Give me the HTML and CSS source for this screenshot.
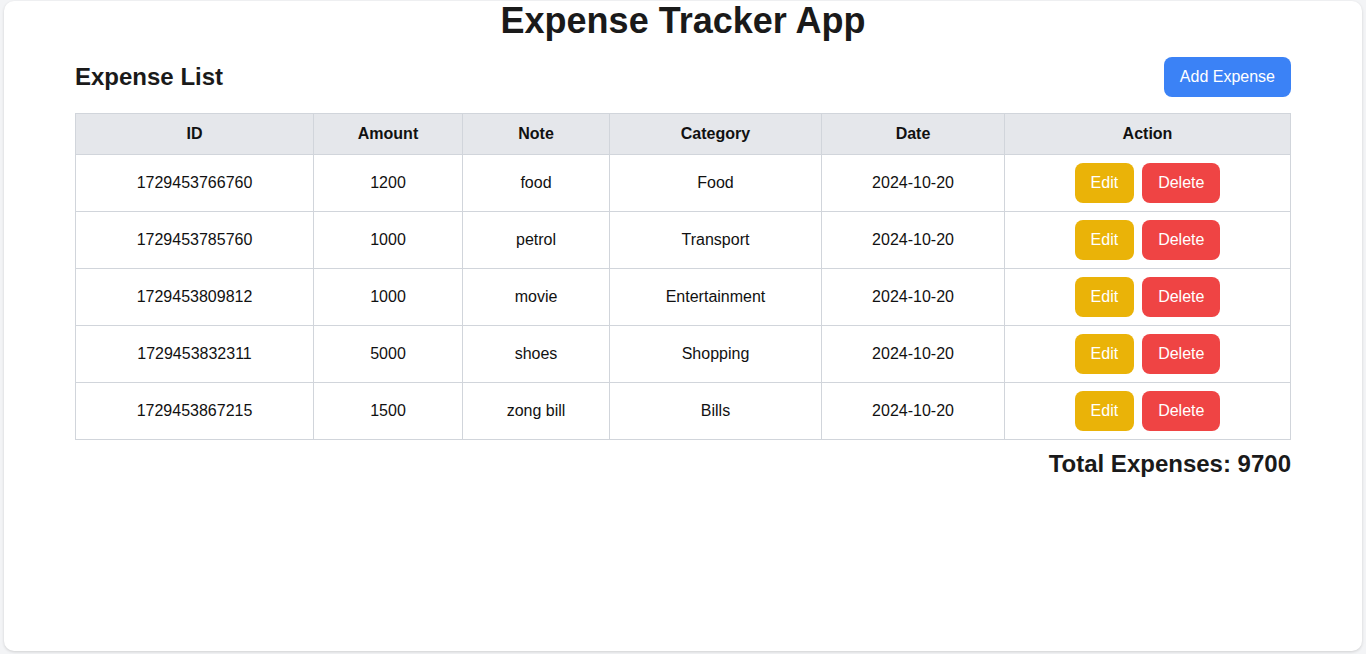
FILE: index.html
```html
<!DOCTYPE html>
<html lang="en">
<head>
    <meta charset="UTF-8">
    <meta name="viewport" content="width=device-width, initial-scale=1.0">
    <title>Expense Tracker App</title>
    <link rel="stylesheet" href="styles.css">
</head>
<body>

    <div class="card">
        <h1>Expense Tracker App</h1>

        <div class="content">
            <!-- List header -->
            <div class="list-header">
                <h2>Expense List</h2>
                <button class="btn btn-add">Add Expense</button>
            </div>

            <!-- Expense table -->
            <table class="expense-table">
                <colgroup>
                    <col class="col-id">
                    <col class="col-amount">
                    <col class="col-note">
                    <col class="col-category">
                    <col class="col-date">
                    <col class="col-action">
                </colgroup>
                <thead>
                    <tr>
                        <th>ID</th>
                        <th>Amount</th>
                        <th>Note</th>
                        <th>Category</th>
                        <th>Date</th>
                        <th>Action</th>
                    </tr>
                </thead>
                <tbody>
                    <tr>
                        <td>1729453766760</td>
                        <td>1200</td>
                        <td>food</td>
                        <td>Food</td>
                        <td>2024-10-20</td>
                        <td><button class="btn btn-edit">Edit</button><button class="btn btn-delete">Delete</button></td>
                    </tr>
                    <tr>
                        <td>1729453785760</td>
                        <td>1000</td>
                        <td>petrol</td>
                        <td>Transport</td>
                        <td>2024-10-20</td>
                        <td><button class="btn btn-edit">Edit</button><button class="btn btn-delete">Delete</button></td>
                    </tr>
                    <tr>
                        <td>1729453809812</td>
                        <td>1000</td>
                        <td>movie</td>
                        <td>Entertainment</td>
                        <td>2024-10-20</td>
                        <td><button class="btn btn-edit">Edit</button><button class="btn btn-delete">Delete</button></td>
                    </tr>
                    <tr>
                        <td>1729453832311</td>
                        <td>5000</td>
                        <td>shoes</td>
                        <td>Shopping</td>
                        <td>2024-10-20</td>
                        <td><button class="btn btn-edit">Edit</button><button class="btn btn-delete">Delete</button></td>
                    </tr>
                    <tr>
                        <td>1729453867215</td>
                        <td>1500</td>
                        <td>zong bill</td>
                        <td>Bills</td>
                        <td>2024-10-20</td>
                        <td><button class="btn btn-edit">Edit</button><button class="btn btn-delete">Delete</button></td>
                    </tr>
                </tbody>
            </table>

            <!-- Total -->
            <div class="total">Total Expenses: 9700</div>
        </div>
    </div>

</body>
</html>
```

FILE: styles.css
```css
body {
    font-family: Arial, "Liberation Sans", sans-serif;
    background-color: #f3f4f6;
    color: #111;
    margin: 0;
    padding: 1px 4px 3px;
}

.card {
    height: 650px;
    box-sizing: border-box;
    background-color: #fff;
    border-radius: 10px;
    box-shadow: 0 1px 3px rgba(0, 0, 0, 0.15);
    padding: 0 71px;
}

h1 {
    margin: 0 0 16px;
    text-align: center;
    font-size: 36px;
    line-height: 40px;
    font-weight: bold;
    color: #1a1a1a;
}

.list-header {
    display: flex;
    justify-content: space-between;
    align-items: center;
    margin-bottom: 16px;
}

h2 {
    margin: 0;
    font-size: 24px;
    line-height: 32px;
    font-weight: bold;
    color: #1a1a1a;
}

.btn {
    font-family: inherit;
    font-size: 16px;
    line-height: 24px;
    padding: 8px 16px;
    border: none;
    border-radius: 8px;
    color: #fff;
    cursor: pointer;
}

.btn-add {
    background-color: #3b82f6;
}

.btn-edit {
    background-color: #eab308;
    margin-right: 8px;
}

.btn-delete {
    background-color: #ef4444;
}

.expense-table {
    width: 100%;
    border-collapse: collapse;
    table-layout: fixed;
    font-size: 16px;
}

.col-id { width: 238px; }
.col-amount { width: 149px; }
.col-note { width: 147px; }
.col-category { width: 212px; }
.col-date { width: 183px; }

.expense-table th,
.expense-table td {
    border: 1px solid #d1d5db;
    padding: 8px;
    text-align: center;
    line-height: 24px;
}

.expense-table th {
    background-color: #e5e7eb;
    font-weight: bold;
}

.expense-table td {
    height: 40px;
}

.total {
    margin-top: 8px;
    text-align: right;
    font-size: 24px;
    line-height: 32px;
    font-weight: bold;
    color: #1a1a1a;
}
```
